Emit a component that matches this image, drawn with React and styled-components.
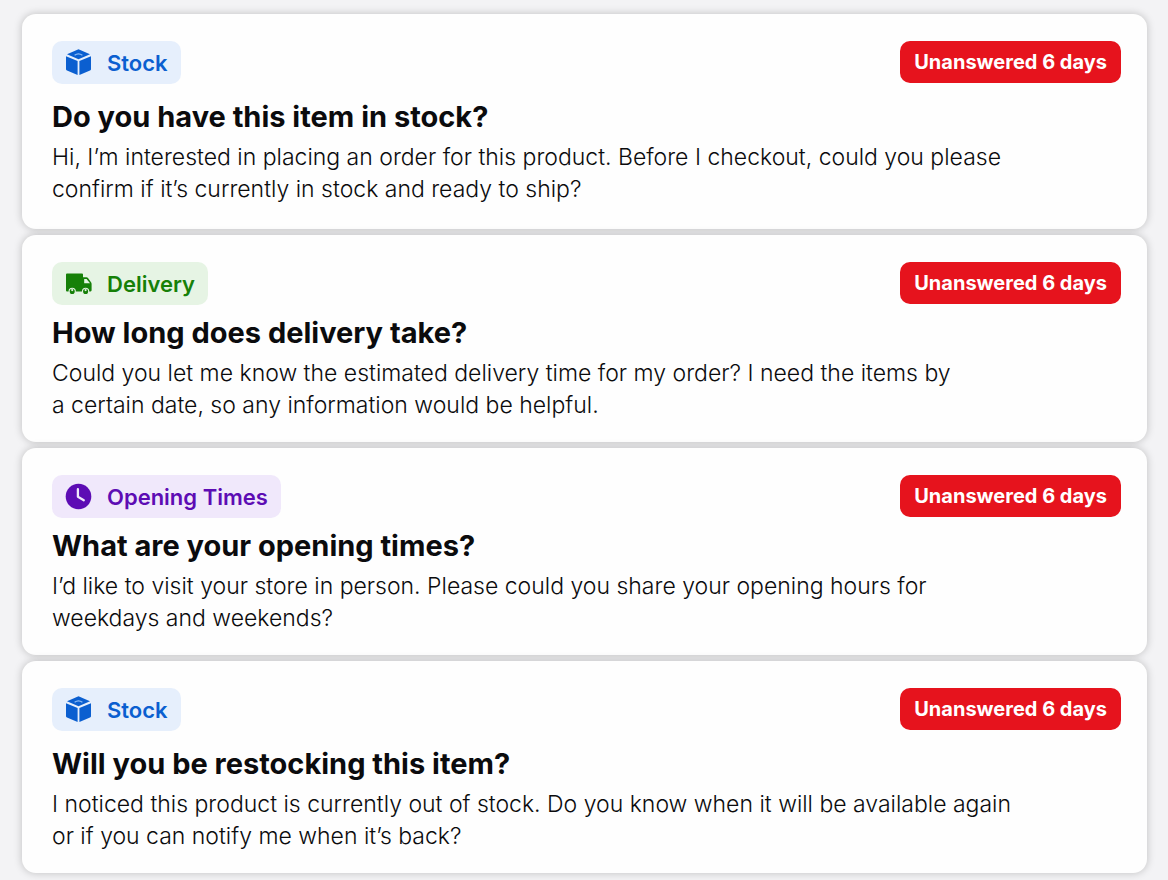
import React from 'react';
import styled, { createGlobalStyle } from 'styled-components';

const Global = createGlobalStyle`
  * { box-sizing: border-box; }
  body { margin: 0; background: #f3f3f5; color: #0b0b0d; font-family: Inter, "Liberation Sans", sans-serif; }
`;

const List = styled.main`
  display: flex;
  flex-direction: column;
  gap: 6px;
  padding: 14px 21px 7px 22px;
`;

const Card = styled.article`
  padding: 27px 26px 21px 30px;
  background: #fefefe;
  border-radius: 14px;
  box-shadow: 0 0 8px rgba(0, 0, 0, 0.22);

  &:first-child { padding-bottom: 24px; }
`;

const Top = styled.header`
  display: flex;
  justify-content: space-between;
  align-items: flex-start;
`;

const tones = {
  blue: ['#e6effc', '#0b5fd0'],
  green: ['#e6f4e4', '#168008'],
  purple: ['#f0e8fb', '#5d0cb4'],
};

const Tag = styled.span`
  display: inline-flex;
  align-items: center;
  gap: 15px;
  height: 43px;
  padding: 0 13px;
  border-radius: 10px;
  font-size: 22px;
  font-weight: 600;
  background: ${(p) => tones[p.$tone][0]};
  color: ${(p) => tones[p.$tone][1]};
`;

const Glyph = styled.svg`
  width: 27px;
  height: 27px;
  flex: none;
`;

const Status = styled.span`
  display: inline-flex;
  align-items: center;
  height: 42px;
  padding: 0 14px;
  border-radius: 10px;
  background: #e6131d;
  color: #fff;
  font-size: 20px;
  font-weight: 700;
`;

const Title = styled.h2`
  margin: ${(p) => (p.$roomy ? 13 : 8)}px 0 4px;
  font-size: 29px;
  line-height: 40px;
  font-weight: 700;
`;

const Message = styled.p`
  margin: 0;
  font-size: 23px;
  line-height: 32px;
  font-weight: 340;
  color: #0b0b0d;
  white-space: pre-line;
`;

const BoxIcon = () => (
  <Glyph viewBox="0 0 27 27" fill="currentColor" aria-hidden="true">
    <path d="M13.5 0.2 25 5.2 13.5 10.2 2 5.2Z" />
    <path d="M1 7.2 12.6 12.1V26L2 21.6Q1 21.2 1 20.2Z" />
    <path d="M26 7.2 14.4 12.1V26L25 21.6Q26 21.2 26 20.2Z" />
    <path d="M9.6 6.2Q13.4 3.4 17.4 6.2" fill="none" stroke="#8ebcf4" strokeWidth="1.2" />
  </Glyph>
);

const TruckIcon = () => (
  <Glyph viewBox="0 0 27 27" fill="currentColor" aria-hidden="true">
    <path d="M2 3.6H17Q18 3.6 18 4.6V7.3H21.4Q22.4 7.3 23 8.1L26 12.2Q26.6 13 26.6 14V20.3Q26.6 21.4 25.6 21.4H2Q1 21.4 1 20.4V4.6Q1 3.6 2 3.6Z" />
    <path d="M19.2 8.9H21.6L25 13.3H19.2Z" fill="#e6f4e4" />
    <g stroke="#e6f4e4" strokeWidth="1.1">
      <circle cx="7.2" cy="21.4" r="3.1" />
      <circle cx="20.6" cy="21.4" r="3.1" />
    </g>
    <circle cx="7.2" cy="20.1" r="1.1" fill="#e6f4e4" />
    <circle cx="20.6" cy="20.1" r="1.1" fill="#e6f4e4" />
  </Glyph>
);

const ClockIcon = () => (
  <Glyph viewBox="0 0 27 27" fill="currentColor" aria-hidden="true">
    <circle cx="13.5" cy="13.5" r="12.8" />
    <path d="M12.9 6.2V13.8L18.8 17.2" fill="none" stroke="#f0e8fb" strokeWidth="2.3" strokeLinecap="round" strokeLinejoin="round" />
  </Glyph>
);

const topics = {
  stock: { tone: 'blue', label: 'Stock', Icon: BoxIcon, roomy: true },
  delivery: { tone: 'green', label: 'Delivery', Icon: TruckIcon },
  opening: { tone: 'purple', label: 'Opening Times', Icon: ClockIcon },
};

const questions = [
  {
    topic: 'stock',
    title: 'Do you have this item in stock?',
    text: 'Hi, I’m interested in placing an order for this product. Before I checkout, could you please\nconfirm if it’s currently in stock and ready to ship?',
  },
  {
    topic: 'delivery',
    title: 'How long does delivery take?',
    text: 'Could you let me know the estimated delivery time for my order? I need the items by\na certain date, so any information would be helpful.',
  },
  {
    topic: 'opening',
    title: 'What are your opening times?',
    text: 'I’d like to visit your store in person. Please could you share your opening hours for\nweekdays and weekends?',
  },
  {
    topic: 'stock',
    title: 'Will you be restocking this item?',
    text: 'I noticed this product is currently out of stock. Do you know when it will be available again\nor if you can notify me when it’s back?',
  },
];

export default function App() {
  return (
    <>
      <Global />
      <List>
        {questions.map(({ topic, title, text }) => {
          const { tone, label, Icon, roomy } = topics[topic];
          return (
            <Card key={title}>
              <Top>
                <Tag $tone={tone}><Icon />{label}</Tag>
                <Status>Unanswered 6 days</Status>
              </Top>
              <Title $roomy={roomy}>{title}</Title>
              <Message>{text}</Message>
            </Card>
          );
        })}
      </List>
    </>
  );
}
